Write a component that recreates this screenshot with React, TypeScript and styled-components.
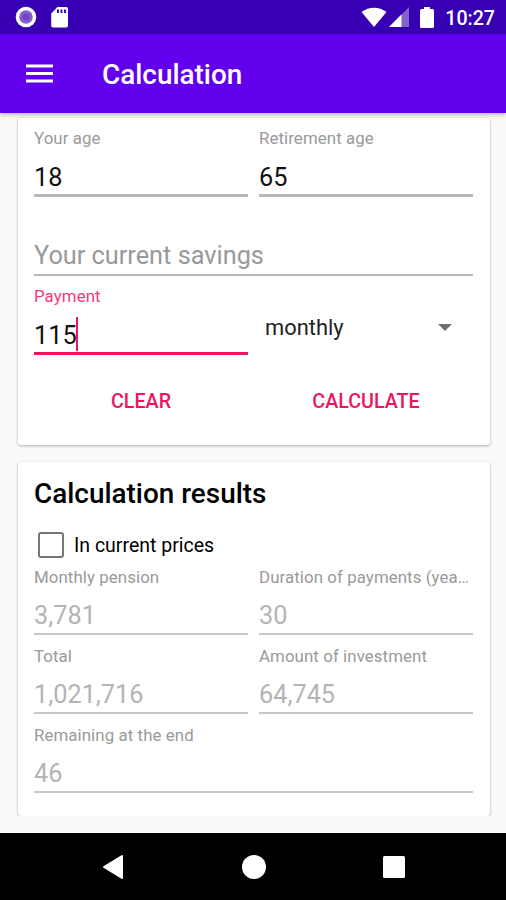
import React from "react";
import styled, { createGlobalStyle } from "styled-components";

const GlobalStyle = createGlobalStyle`
  * { box-sizing: border-box; }
  html, body { margin: 0; padding: 0; background: #fafafa; }
  body { font-family: Roboto, "Liberation Sans", sans-serif; color: #000; }
`;

const Screen = styled.div`
  display: flex;
  flex-direction: column;
  width: 506px;
  height: 900px;
  overflow: hidden;
  background: #fafafa;
`;

const StatusBar = styled.div`
  display: flex;
  align-items: center;
  flex: none;
  height: 34px;
  padding: 0 11px 0 15px;
  background: #3700b3;
  color: #fff;
`;

const StatusIcon = styled.svg<{ $gap?: number }>`
  display: block;
  flex: none;
  margin-right: ${(p) => p.$gap ?? 0}px;
`;

const Spacer = styled.div`
  flex: 1;
`;

const Clock = styled.span`
  font-size: 19.6px;
  font-weight: 500;
  line-height: 24px;
  padding-top: 3px;
`;

const AppBar = styled.header`
  display: flex;
  align-items: center;
  flex: none;
  height: 79px;
  padding: 0 26px;
  background: #6200ee;
  color: #fff;
  box-shadow: 0 2px 4px rgba(0, 0, 0, 0.25);
  z-index: 1;
`;

const MenuButton = styled.button`
  display: block;
  border: 0;
  padding: 0;
  margin: 0 49px 0 0;
  background: none;
  line-height: 0;
`;

const AppTitle = styled.h1`
  margin: 3px 0 0;
  font-size: 27.9px;
  font-weight: 500;
  line-height: 40px;
`;

const Content = styled.main`
  display: flex;
  flex-direction: column;
  gap: 17px;
  flex: 1;
  min-height: 0;
  padding: 5px 16px 17px 18px;
`;

const Card = styled.section<{ $height: number; $flat?: boolean }>`
  flex: none;
  height: ${(p) => p.$height}px;
  padding: 0 17px 0 16px;
  background: #fff;
  border-radius: 3px;
  box-shadow: 0 1px 3px rgba(0, 0, 0, 0.3);
  ${(p) => p.$flat && "clip-path: inset(-3px -3px 0 -3px);"}
`;

const Row = styled.div`
  display: grid;
  grid-template-columns: 1fr 1fr;
  column-gap: 11px;
`;

type Tone = "normal" | "active" | "disabled";

const lineColors: Record<Tone, string> = {
  normal: "#b8b8b8",
  active: "#ec1561",
  disabled: "#c8c8c8",
};

const FieldBox = styled.div<{ $tone: Tone; $thick?: boolean }>`
  display: flex;
  flex-direction: column;
  height: 79px;
  min-width: 0;
  padding-top: ${(p) => (p.$tone === "disabled" ? 11 : 10)}px;
  border-bottom: ${(p) => (p.$thick ? 3 : 2)}px solid ${(p) => lineColors[p.$tone]};
`;

const Label = styled.label<{ $tone: Tone }>`
  flex: none;
  height: 20px;
  font-size: 16.85px;
  letter-spacing: 0.08px;
  line-height: 20px;
  white-space: nowrap;
  color: ${(p) => (p.$tone === "active" ? "#f03a7c" : "#9a9a9a")};
`;

const Value = styled.div<{ $muted?: boolean }>`
  display: flex;
  flex: none;
  align-items: center;
  height: 36px;
  margin-top: ${(p) => (p.$muted ? 11 : 12)}px;
  font-size: 25.3px;
  line-height: 36px;
  color: ${(p) => (p.$muted ? "#b4b4b4" : "#111")};
`;

const Hint = styled(Value)`
  margin-top: 11px;
  color: #999;
`;

const Caret = styled.span`
  width: 2.5px;
  height: 34px;
  margin: -5px 0 0 -1px;
  background: #ec1561;
`;

const Spinner = styled.div`
  display: flex;
  align-items: center;
  justify-content: space-between;
  height: 79px;
  padding: 23px 21px 0 6px;
  font-size: 21.9px;
  color: #222;
`;

const Actions = styled(Row)`
  margin-top: 25px;
`;

const TextButton = styled.button`
  height: 44px;
  border: 0;
  padding: 0;
  background: none;
  font: 500 19.7px/44px Roboto, sans-serif;
  color: #ec1561;
`;

const CardTitle = styled.h2`
  margin: 0;
  padding-top: 14px;
  font-size: 27.9px;
  font-weight: 500;
  line-height: 36px;
`;

const CheckRow = styled.label`
  display: flex;
  align-items: center;
  height: 44px;
  gap: 10px;
  padding: 24px 0 0 4px;
  font-size: 19.5px;
  line-height: 24px;
`;

const CheckBox = styled.span`
  width: 26px;
  height: 26px;
  margin-top: -2px;
  border: 2.6px solid #757575;
  border-radius: 3px;
`;

const NavBar = styled.nav`
  display: flex;
  align-items: center;
  justify-content: space-between;
  flex: none;
  height: 67px;
  padding: 0 101px;
  background: #000;
`;

interface FieldProps {
  label?: string;
  value?: string;
  hint?: string;
  tone?: Tone;
  thick?: boolean;
}

function Field({ label, value, hint, tone = "normal", thick }: FieldProps) {
  return (
    <FieldBox $tone={tone} $thick={thick}>
      <Label $tone={tone}>{label}</Label>
      {hint ? (
        <Hint>{hint}</Hint>
      ) : (
        <Value $muted={tone === "disabled"}>
          {value}
          {tone === "active" && <Caret />}
        </Value>
      )}
    </FieldBox>
  );
}

export default function App() {
  return (
    <>
      <GlobalStyle />
      <Screen>
        <StatusBar>
          <StatusIcon width="22" height="22" viewBox="0 0 22 22" $gap={13}>
            <circle cx="11" cy="11" r="10.3" fill="#fff" />
            <circle cx="11" cy="11" r="6.8" fill="#8560d0" />
            <circle cx="11" cy="11" r="3.5" fill="#7045c5" />
          </StatusIcon>
          <StatusIcon width="20" height="22" viewBox="0 0 20 22">
            <path d="M7.5 1H16a2 2 0 0 1 2 2v16.500a2 2 0 0 1-2 2H3.200a2 2 0 0 1-2-2V7.500z" fill="#fff" />
            <path d="M8 3.500v3.500M11.500 3.500v3.500M15 3.500v3.500" stroke="#3700b3" strokeWidth="1.900" />
          </StatusIcon>
          <Spacer />
          <StatusIcon width="26" height="22" viewBox="0 0 26 22" $gap={2}>
            <path d="M.5 6C8 .2 18 .2 25.500 6L13 21z" fill="#fff" />
          </StatusIcon>
          <StatusIcon width="20" height="22" viewBox="0 0 20 22" $gap={11}>
            <path d="M20 1v20H0z" fill="#fff" opacity=".38" />
            <path d="M12.500 8.500V21H0z" fill="#fff" />
          </StatusIcon>
          <StatusIcon width="14" height="23" viewBox="0 0 14 23" $gap={11}>
            <path d="M4 1h6v2h2.500q1.500 0 1.500 1.500v16q0 1.500-1.500 1.500h-11Q0 22 0 20.500v-16Q0 3 1.500 3H4z" fill="#fff" />
          </StatusIcon>
          <Clock>10:27</Clock>
        </StatusBar>

        <AppBar>
          <MenuButton aria-label="Menu">
            <svg width="27" height="20" viewBox="0 0 27 20">
              <path d="M0 2h27M0 9.500h27M0 17h27" stroke="#fff" strokeWidth="3" />
            </svg>
          </MenuButton>
          <AppTitle>Calculation</AppTitle>
        </AppBar>

        <Content>
          <Card $height={327}>
            <Row>
              <Field label="Your age" value="18" thick />
              <Field label="Retirement age" value="65" thick />
            </Row>
            <Field hint="Your current savings" />
            <Row>
              <Field label="Payment" value="115" tone="active" thick />
              <Spinner>
                monthly
                <svg width="14" height="7" viewBox="0 0 14 7">
                  <path d="M0 0h14L7 7z" fill="#707070" />
                </svg>
              </Spinner>
            </Row>
            <Actions>
              <TextButton>CLEAR</TextButton>
              <TextButton>CALCULATE</TextButton>
            </Actions>
          </Card>

          <Card $height={354} $flat>
            <CardTitle>Calculation results</CardTitle>
            <CheckRow>
              <CheckBox />
              In current prices
            </CheckRow>
            <Row>
              <Field label="Monthly pension" value="3,781" tone="disabled" />
              <Field label="Duration of payments (yea…" value="30" tone="disabled" />
              <Field label="Total" value="1,021,716" tone="disabled" />
              <Field label="Amount of investment" value="64,745" tone="disabled" />
            </Row>
            <Field label="Remaining at the end" value="46" tone="disabled" />
          </Card>
        </Content>

        <NavBar>
          <svg width="24" height="26" viewBox="0 0 24 26">
            <path d="M21 2v22L3 13z" fill="#fff" stroke="#fff" strokeWidth="2" strokeLinejoin="round" />
          </svg>
          <svg width="26" height="26" viewBox="0 0 26 26">
            <circle cx="13" cy="13" r="12" fill="#fff" />
          </svg>
          <svg width="22" height="22" viewBox="0 0 22 22">
            <rect width="22" height="22" rx="1.500" fill="#fff" />
          </svg>
        </NavBar>
      </Screen>
    </>
  );
}
